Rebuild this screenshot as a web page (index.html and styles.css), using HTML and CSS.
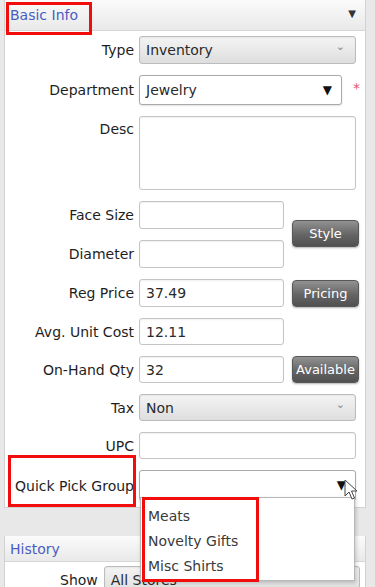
FILE: index.html
```html
<!DOCTYPE html>
<html lang="en">
<head>
  <meta charset="UTF-8">
  <title>Item - Basic Info</title>
  <meta name="viewport" content="width=device-width, initial-scale=1.0">
  <link rel="stylesheet" href="styles.css">
</head>
<body>
  <div class="panel">
    <div class="panel-head">
      <span class="panel-title">Basic Info</span>
      <span class="collapse">&#9660;</span>
    </div>

    <div class="form">
      <label class="lbl">Type</label>
      <div class="select select-ro wide h28">Inventory<span class="chev">&#8964;</span></div>

      <label class="lbl">Department</label>
      <div class="dept">
        <div class="select select-w h30">Jewelry<span class="tri">&#9660;</span></div>
        <span class="req">*</span>
      </div>

      <label class="lbl lbl-top">Desc</label>
      <div class="field wide textarea"></div>

      <label class="lbl">Face Size</label>
      <div class="field h28"></div>
      <button class="btn btn-span">Style</button>

      <label class="lbl">Diameter</label>
      <div class="field h28"></div>

      <label class="lbl">Reg Price</label>
      <div class="field h28">37.49</div>
      <button class="btn">Pricing</button>

      <label class="lbl">Avg. Unit Cost</label>
      <div class="field h27">12.11</div>

      <label class="lbl">On-Hand Qty</label>
      <div class="field h27">32</div>
      <button class="btn">Available</button>

      <label class="lbl">Tax</label>
      <div class="select select-ro wide h27">Non<span class="chev">&#8964;</span></div>

      <label class="lbl">UPC</label>
      <div class="field wide h27"></div>

      <label class="lbl">Quick Pick Group</label>
      <div class="select select-w wide h31"><span class="tri tri-qp">&#9660;</span></div>
    </div>
  </div>

  <div class="panel panel-history">
    <div class="panel-head">
      <span class="panel-title">History</span>
    </div>
    <div class="history-body">
      <label class="lbl-show">Show</label>
      <div class="select select-ro stores">All Stores<span class="chev">&#8964;</span></div>
    </div>
  </div>

  <!-- open dropdown of Quick Pick Group -->
  <ul class="dropdown">
    <li>Meats</li>
    <li>Novelty Gifts</li>
    <li>Misc Shirts</li>
  </ul>

  <svg class="cursor" width="14" height="22" viewBox="0 0 14 22">
    <path d="M1 1 L1 17 L5 13 L8 20 L10.5 19 L7.5 12 L13 12 Z" fill="#fff" stroke="#444" stroke-width="1"/>
  </svg>

  <!-- highlight boxes -->
  <div class="mark mark-title"></div>
  <div class="mark mark-qp"></div>
  <div class="mark mark-list"></div>
</body>
</html>
```

FILE: styles.css
```css
body {
  margin: 0;
  background: #e8e8e8;
  font-family: 'DejaVu Sans', Verdana, sans-serif;
  font-size: 14px;
  color: #1e1e1e;
  height: 587px;
  overflow: hidden;
  position: relative;
}
.panel {
  margin-left: 4px;
  width: 360px;
  border: 1px solid #d2d2d2;
  border-top: none;
  background: #fff;
}
.panel-head {
  height: 30px;
  border-bottom: 1px solid #d6d6d6;
  background: linear-gradient(#fbfbfb, #e9e9e9);
  display: flex;
  align-items: center;
  justify-content: space-between;
  padding: 0 9px 0 5px;
}
.panel-title {
  color: #4a5cc4;
}
.collapse {
  font-size: 10px;
  color: #333;
  margin-top: -4px;
}
.form {
  display: grid;
  grid-template-columns: 134px 145px 1fr;
  row-gap: 11px;
  padding: 5px 0 6px;
}
.lbl {
  grid-column: 1;
  align-self: center;
  text-align: right;
  padding-right: 5px;
  white-space: nowrap;
}
.lbl-top {
  align-self: start;
  padding-top: 5px;
}
.field, .select {
  box-sizing: border-box;
  border: 1px solid #c4c4c4;
  border-radius: 3px;
  background: #fff;
  display: flex;
  align-items: center;
  padding-left: 6px;
  color: #2a2a2a;
  box-shadow: inset 0 1px 2px rgba(0, 0, 0, 0.06);
}
.wide {
  grid-column: 2 / 4;
  width: 217px;
}
.h27 { height: 27px; }
.h28 { height: 28px; }
.h30 { height: 30px; }
.h31 { height: 31px; }
.textarea {
  height: 74px;
}
.select {
  position: relative;
}
.select-ro {
  background: linear-gradient(#f4f4f4, #dedede);
  border-color: #bcbcbc;
}
.select-w {
  border-color: #a9a9a9;
  box-shadow: 0 1px 2px rgba(0, 0, 0, 0.12);
}
.chev {
  position: absolute;
  right: 10px;
  top: 3px;
  font-size: 11px;
  color: #888;
}
.tri {
  position: absolute;
  right: 9px;
  top: 7px;
  font-size: 12px;
  color: #111;
}
.tri-qp {
  right: 9px;
}
.dept {
  grid-column: 2 / 4;
  display: flex;
  align-items: center;
}
.dept .select {
  width: 203px;
}
.req {
  color: #e25766;
  margin-left: 11px;
  margin-top: -4px;
}
.btn {
  grid-column: 3;
  align-self: center;
  margin-left: 8px;
  width: 67px;
  height: 27px;
  padding: 0;
  border: 1px solid #585858;
  border-radius: 4px;
  background: linear-gradient(#929292, #656565 55%, #505050);
  color: #fff;
  font-family: inherit;
  font-size: 13px;
  box-shadow: 0 1px 2px rgba(0, 0, 0, 0.3);
}
.btn-span {
  grid-row: span 2;
  margin-top: -3px;
}
.panel-history {
  margin-top: 28px;
}
.panel-history .panel-head {
  height: 25px;
}
.history-body {
  display: flex;
  align-items: flex-start;
  gap: 6px;
  padding: 4px 0 0 55px;
  height: 40px;
}
.lbl-show {
  padding-top: 6px;
}
.stores {
  width: 256px;
  height: 28px;
}
.dropdown {
  position: absolute;
  left: 140px;
  top: 497px;
  width: 215px;
  height: 84px;
  box-sizing: border-box;
  margin: 0;
  padding: 6px 0 0 7px;
  list-style: none;
  background: #fff;
  border: 1px solid #b8b8b8;
  box-shadow: 1px 2px 4px rgba(0, 0, 0, 0.2);
  color: #3a3a3a;
}
.dropdown li {
  height: 25px;
  line-height: 25px;
}
.cursor {
  position: absolute;
  left: 344px;
  top: 479px;
}
.mark {
  position: absolute;
  border: 3px solid #f20d0d;
  box-sizing: border-box;
}
.mark-title {
  left: 6px;
  top: 2px;
  width: 86px;
  height: 33px;
}
.mark-qp {
  left: 8px;
  top: 455px;
  width: 128px;
  height: 52px;
}
.mark-list {
  left: 142px;
  top: 497px;
  width: 117px;
  height: 85px;
}
```
